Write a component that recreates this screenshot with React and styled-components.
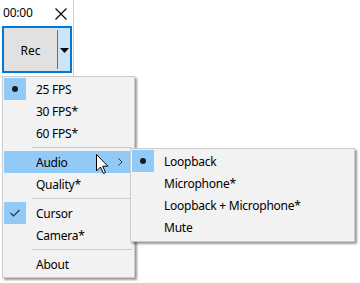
import React from 'react';
import styled, { createGlobalStyle } from 'styled-components';

const GlobalStyle = createGlobalStyle`
  html, body {
    margin: 0;
    padding: 0;
    background: #fff;
  }
  body {
    font-family: "Noto Sans", "Open Sans", sans-serif;
    font-size: 12px;
    color: #000;
  }
`;

const mainItems = [
  { label: '25 FPS', mark: 'dot' },
  { label: '30 FPS*' },
  { label: '60 FPS*' },
  { sep: true },
  { label: 'Audio', sub: true, hot: true },
  { label: 'Quality*' },
  { sep: true },
  { label: 'Cursor', mark: 'check' },
  { label: 'Camera*' },
  { sep: true },
  { label: 'About' },
];

const audioItems = [
  { label: 'Loopback', mark: 'dot' },
  { label: 'Microphone*' },
  { label: 'Loopback + Microphone*' },
  { label: 'Mute' },
];

const Mark = ({ type }) => {
  if (type === 'dot') {
    return (
      <svg width="8" height="8" viewBox="0 0 8 8">
        <circle cx="4" cy="4" r="3" fill="#1a1a1a" />
      </svg>
    );
  }
  if (type === 'check') {
    return (
      <svg width="12" height="10" viewBox="0 0 12 10">
        <path d="M1.5 5 L4.5 8 L10.5 2" fill="none" stroke="#333" strokeWidth="1.2" />
      </svg>
    );
  }
  return null;
};

const MenuList = ({ items }) => (
  <>
    {items.map((it, i) =>
      it.sep ? (
        <Separator key={i} />
      ) : (
        <Item key={i} $hot={it.hot}>
          <CheckBox $on={!!it.mark}>
            <Mark type={it.mark} />
          </CheckBox>
          <Label>{it.label}</Label>
          {it.sub && (
            <Chevron>
              <svg width="5" height="8" viewBox="0 0 5 8">
                <path d="M0.5 0.5 L4 4 L0.5 7.5" fill="none" stroke="#333" strokeWidth="1" />
              </svg>
            </Chevron>
          )}
        </Item>
      )
    )}
  </>
);

const App = () => (
  <Page>
    <GlobalStyle />
    <Window>
      <TitleBar>
        <Timer>00:00</Timer>
        <Close>
          <svg width="12" height="12" viewBox="0 0 12 12">
            <path d="M0.5 0.5 L11.5 11.5 M11.5 0.5 L0.5 11.5" stroke="#000" strokeWidth="1.1" />
          </svg>
        </Close>
      </TitleBar>
      <SplitButton>
        <RecPart>Rec</RecPart>
        <Divider />
        <DropPart>
          <svg width="9" height="5" viewBox="0 0 9 5">
            <path d="M0 0 H9 L4.5 5 Z" fill="#000" />
          </svg>
        </DropPart>
      </SplitButton>
    </Window>

    <Menu>
      <MenuList items={mainItems} />
    </Menu>

    <SubMenu>
      <MenuList items={audioItems} />
    </SubMenu>

    <Pointer>
      <svg width="13" height="21" viewBox="0 0 13 21">
        <path
          d="M0.5 0.5 V17 L4.5 13 L7.5 19.5 L9.5 18.5 L6.7 12.2 L11.8 12.2 Z"
          fill="#fff"
          stroke="#000"
          strokeWidth="1"
        />
      </svg>
    </Pointer>
  </Page>
);

const Page = styled.div`
  position: relative;
  width: 360px;
  height: 283px;
  overflow: hidden;
  background: #fff;
`;

const Window = styled.div`
  width: 73px;
  height: 76px;
  border-right: 1px solid #cfcfcf;
  background: #fff;
  display: flex;
  flex-direction: column;
`;

const TitleBar = styled.div`
  height: 26px;
  display: flex;
  align-items: center;
  justify-content: space-between;
  padding: 0 6px 0 3px;
`;

const Timer = styled.span`
  font-size: 12px;
  letter-spacing: -0.2px;
  margin-top: -1px;
`;

const Close = styled.span`
  display: flex;
  margin-top: 1px;
`;

const SplitButton = styled.div`
  margin-left: 2px;
  width: 70px;
  height: 47px;
  box-sizing: border-box;
  border: 2px solid #0078d7;
  display: flex;
  align-items: stretch;
  background: #e1e1e1;
`;

const RecPart = styled.div`
  flex: 1;
  display: flex;
  align-items: center;
  justify-content: center;
  font-size: 12px;
  padding-top: 1px;
`;

const Divider = styled.div`
  width: 1px;
  margin: 2px 0;
  background: #6d6d6d;
`;

const DropPart = styled.div`
  width: 12px;
  background: #cce4f7;
  display: flex;
  align-items: center;
  justify-content: center;
  padding-top: 2px;
`;

const Popup = styled.div`
  position: absolute;
  box-sizing: border-box;
  background: #f2f2f2;
  border: 1px solid #cccccc;
  box-shadow: 2px 2px 2px rgba(0, 0, 0, 0.4);
  padding: 1px 2px 2px 1px;
  display: flex;
  flex-direction: column;
`;

const Menu = styled(Popup)`
  left: 2px;
  top: 76px;
  width: 133px;
  height: 202px;
`;

const SubMenu = styled(Popup)`
  left: 130px;
  top: 148px;
  width: 225px;
  height: 94px;
`;

const Item = styled.div`
  height: 22px;
  display: flex;
  align-items: center;
  background: ${(p) => (p.$hot ? '#91c9f7' : 'transparent')};
`;

const CheckBox = styled.div`
  width: 22px;
  height: 22px;
  display: flex;
  align-items: center;
  justify-content: center;
  background: ${(p) => (p.$on ? '#91c9f7' : 'transparent')};
`;

const Label = styled.span`
  flex: 1;
  padding-left: 10px;
  padding-top: 1px;
  white-space: nowrap;
  line-height: 21px;
  letter-spacing: -0.25px;
`;

const Chevron = styled.span`
  display: flex;
  margin-right: 9px;
`;

const Separator = styled.div`
  height: 7px;
  display: flex;
  align-items: center;
  padding-left: 28px;
  &::after {
    content: '';
    flex: 1;
    height: 1px;
    background: #cccccc;
  }
`;

const Pointer = styled.div`
  position: absolute;
  left: 96px;
  top: 154px;
  display: flex;
`;

export default App;
